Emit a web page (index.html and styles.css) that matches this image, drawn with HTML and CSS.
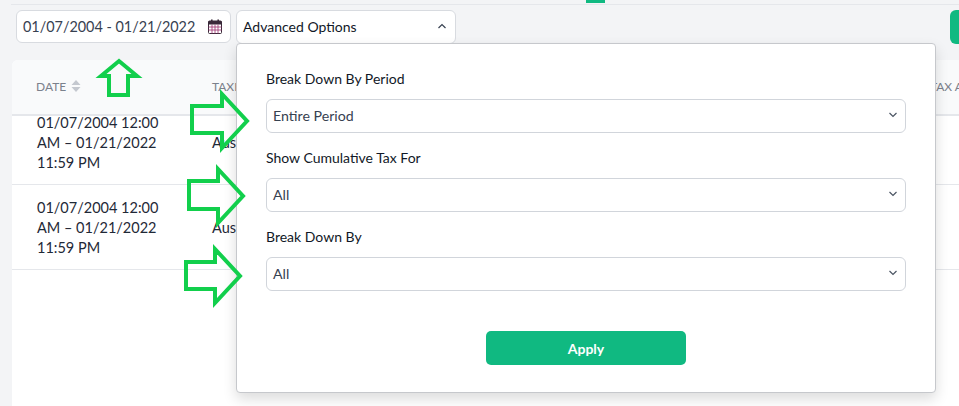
FILE: index.html
```html
<!DOCTYPE html>
<html lang="en">
<head>
<meta charset="utf-8">
<title>Tax report</title>
<link rel="stylesheet" href="styles.css">
</head>
<body>
<div class="page">
  <div class="tabs"><span class="tab-mark"></span></div>
  <div class="toolbar">
    <div class="date-box">
      <span class="nowrap">01/07/2004 - 01/21/2022</span>
      <svg class="cal" viewBox="0 0 14 15" width="14" height="15">
        <rect x="0.5" y="2" width="13" height="12.5" rx="1" fill="#fff" stroke="#3b2a3a"/>
        <rect x="0.5" y="2" width="13" height="3.5" fill="#3b2a3a"/>
        <rect x="3" y="0.5" width="1.6" height="3" fill="#3b2a3a"/>
        <rect x="9.4" y="0.5" width="1.6" height="3" fill="#3b2a3a"/>
        <path d="M0.5 8h13M0.5 11h13M4 5.5v9M7 5.5v9M10 5.5v9" stroke="#a0306e" stroke-width="0.8"/>
      </svg>
    </div>
    <div class="adv-box">
      <span class="nowrap">Advanced Options</span>
      <svg class="chev" viewBox="0 0 10 6" width="10" height="6"><path d="M1.5 5l3.500-3.500L8.500 5" fill="none" stroke="#374151" stroke-width="1.2"/></svg>
    </div>
    <div class="green-btn"></div>
  </div>
  <div class="card">
    <div class="thead">
      <div class="th th-date">DATE
        <svg class="sort" viewBox="0 0 10 12" width="10" height="12"><path d="M5 0l4.500 5h-9zM5 12l4.500-5h-9z" fill="#c4c8cf"/></svg>
      </div>
      <div class="th th-tax">TAXES</div>
      <div class="th th-amt">TAX AMOUNT</div>
    </div>
    <div class="tbody">
      <div class="tr">
        <div class="td-date">01/07/2004 12:00 AM – 01/21/2022 11:59 PM</div>
        <div class="td-tax">Austin</div>
      </div>
      <div class="tr">
        <div class="td-date">01/07/2004 12:00 AM – 01/21/2022 11:59 PM</div>
        <div class="td-tax">Austin</div>
      </div>
    </div>
  </div>
</div>

<div class="popover">
  <div class="field">
    <label class="lbl">Break Down By Period</label>
    <div class="select"><span>Entire Period</span><svg class="chev" viewBox="0 0 10 6" width="10" height="6"><path d="M1.500 1l3.500 3.500L8.500 1" fill="none" stroke="#4b5563" stroke-width="1.2"/></svg></div>
  </div>
  <div class="field">
    <label class="lbl">Show Cumulative Tax For</label>
    <div class="select"><span>All</span><svg class="chev" viewBox="0 0 10 6" width="10" height="6"><path d="M1.500 1l3.500 3.500L8.500 1" fill="none" stroke="#4b5563" stroke-width="1.2"/></svg></div>
  </div>
  <div class="field">
    <label class="lbl">Break Down By</label>
    <div class="select"><span>All</span><svg class="chev" viewBox="0 0 10 6" width="10" height="6"><path d="M1.500 1l3.500 3.500L8.500 1" fill="none" stroke="#4b5563" stroke-width="1.2"/></svg></div>
  </div>
  <div class="apply-row"><div class="apply">Apply</div></div>
</div>

<svg class="arrows" viewBox="0 0 959 406" width="959" height="406">
  <g fill="none" stroke="#12cf4c" stroke-width="4">
    <path d="M109 95V76H101L119 61L137 76H128V95Z"/>
    <path d="M192 106H222V94L247 121L222 148V133H192Z"/>
    <path d="M189 181H218V169L243 196L218 223V209H189Z"/>
    <path d="M186 262H215V249L240 276L215 303V289H186Z"/>
  </g>
</svg>
</body>
</html>
```
FILE: styles.css
```css
* { box-sizing: border-box; }
html, body { margin: 0; height: 406px; overflow: hidden; }
body {
  background: #f3f4f6;
  font-family: "Lato", "Open Sans", sans-serif;
  font-size: 14px;
  color: #111827;
  position: relative;
}
.page { height: 406px; overflow: hidden; }
.nowrap { white-space: nowrap; }
.tabs {
  height: 5px;
  border-bottom: 1px solid #e5e7eb;
  margin-left: 11px;
  display: flex;
  padding-left: 575px;
}
.tab-mark { width: 19px; height: 3px; background: #10b981; }
.toolbar {
  display: flex;
  align-items: flex-start;
  gap: 5px;
  padding: 5px 0 0 16px;
  height: 55px;
}
.date-box, .adv-box {
  background: #fff;
  border: 1px solid #d8dbe0;
  border-radius: 6px;
  height: 33px;
  display: flex;
  align-items: center;
  justify-content: space-between;
  flex: none;
}
.date-box { width: 215px; padding: 0 8px 0 6px; color: #374151; font-size: 14.400px; }
.adv-box { width: 220px; height: 34px; padding: 0 8px 2px 6px; color: #111827; font-size: 14px; }
.green-btn {
  width: 30px;
  height: 34px;
  margin-left: 489px;
  background: #10b981;
  border-radius: 6px;
  flex: none;
}
.card {
  margin-left: 12px;
  background: #fff;
  border-radius: 6px 0 0 0;
  height: 400px;
}
.thead {
  position: relative;
  z-index: 1;
  display: flex;
  align-items: center;
  height: 56px;
  background: #f9fafb;
  border-bottom: 2px solid #e5e7eb;
  border-radius: 6px 0 0 0;
  padding-bottom: 2px;
  font-size: 12px;
  color: #7b818c;
}
.th { white-space: nowrap; flex: none; }
.th-date { width: 200px; padding-left: 24px; display: flex; align-items: center; gap: 5px; }
.th-tax { width: 718px; }
.tbody { margin-top: -16px; position: relative; z-index: 2; }
.tr {
  display: flex;
  height: 85px;
  padding: 13px 0 11px;
  border-bottom: 1px solid #e5e7eb;
  line-height: 20px;
  font-size: 14.500px;
  color: #1f2937;
}
.td-date { width: 200px; padding-left: 25px; padding-right: 50px; flex: none; }
.td-tax { align-self: center; }
.popover {
  position: absolute;
  left: 236px;
  top: 43px;
  width: 700px;
  height: 350px;
  background: #fff;
  border: 1px solid #c6c8cc;
  border-radius: 4px;
  box-shadow: 0 6px 14px rgba(0, 0, 0, 0.14);
  padding: 25px 29px 0;
  z-index: 3;
}
.field { margin-bottom: 15px; }
.lbl { display: block; height: 20px; line-height: 20px; font-size: 14px; color: #111827; margin-bottom: 10px; }
.select {
  height: 34px;
  border: 1px solid #d1d5db;
  border-radius: 6px;
  display: flex;
  align-items: center;
  justify-content: space-between;
  padding: 0 7px 2px 6px;
  color: #374151;
  font-size: 14.200px;
}
.apply-row { display: flex; justify-content: center; margin-top: 40px; }
.apply {
  width: 200px;
  height: 34px;
  background: #10b981;
  border-radius: 5px;
  color: #fff;
  font-weight: 700;
  font-size: 14px;
  display: flex;
  align-items: center;
  justify-content: center;
}
.arrows { position: absolute; left: 0; top: 0; z-index: 4; pointer-events: none; }
```
